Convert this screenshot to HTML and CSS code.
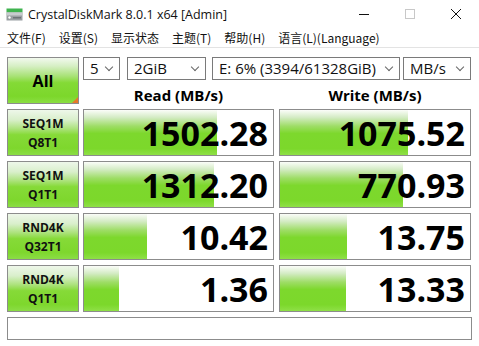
FILE: index.html
```html
<!DOCTYPE html>
<html lang="zh-CN">
<head>
  <meta charset="UTF-8">
  <title>CrystalDiskMark 8.0.1 x64 [Admin]</title>
  <link rel="stylesheet" href="styles.css">
</head>
<body>

<div class="titlebar">
  <svg class="app-icon" width="17" height="13" viewBox="0 0 17 13">
    <rect x="0.5" y="0.5" width="16" height="4" fill="#3fb34f"/>
    <rect x="0.5" y="4.5" width="16" height="8" fill="#9a9fa3"/>
    <rect x="0.5" y="4.5" width="16" height="3" fill="#c7cbce"/>
    <circle cx="3.5" cy="9.5" r="1.2" fill="#ffffff"/>
    <rect x="7" y="9" width="8" height="1.5" fill="#6e7478"/>
  </svg>
  <span class="title">CrystalDiskMark 8.0.1 x64 [Admin]</span>
  <div class="win-ctrls">
    <span class="wc"><svg width="10" height="10" viewBox="0 0 10 10"><line x1="0" y1="5.5" x2="10" y2="5.5" stroke="#111" stroke-width="1"/></svg></span>
    <span class="wc"><svg width="10" height="10" viewBox="0 0 10 10"><rect x="0.5" y="0.5" width="9" height="9" fill="none" stroke="#c8c8c8" stroke-width="1"/></svg></span>
    <span class="wc"><svg width="10" height="10" viewBox="0 0 10 10"><path d="M0 0 L10 10 M10 0 L0 10" stroke="#111" stroke-width="1"/></svg></span>
  </div>
</div>

<div class="menubar">
  <span>文件(F)</span>
  <span>设置(S)</span>
  <span>显示状态</span>
  <span>主题(T)</span>
  <span>帮助(H)</span>
  <span>语言(L)(Language)</span>
</div>

<div class="main">
  <div class="grid">
    <div class="all">All<span class="corner"></span></div>
    <div class="top-right">
      <div class="selects">
        <div class="sel sel-count">5<i class="chev"></i></div>
        <div class="sel sel-size">2GiB<i class="chev"></i></div>
        <div class="sel sel-drive"><span class="sel-text">E: 6% (3394/61328GiB)</span><i class="chev"></i></div>
        <div class="sel sel-unit">MB/s<i class="chev"></i></div>
      </div>
      <div class="heads">
        <div>Read (MB/s)</div>
        <div class="write-col">Write (MB/s)</div>
      </div>
    </div>

    <div class="label">SEQ1M<br>Q8T1</div>
    <div class="value"><div class="fill" style="width:133px"></div><span>1502.28</span></div>
    <div class="value write-col"><div class="fill" style="width:128px"></div><span>1075.52</span></div>

    <div class="label">SEQ1M<br>Q1T1</div>
    <div class="value"><div class="fill" style="width:130px"></div><span>1312.20</span></div>
    <div class="value write-col"><div class="fill" style="width:123px"></div><span>770.93</span></div>

    <div class="label">RND4K<br>Q32T1</div>
    <div class="value"><div class="fill" style="width:63px"></div><span>10.42</span></div>
    <div class="value write-col"><div class="fill" style="width:67px"></div><span>13.75</span></div>

    <div class="label">RND4K<br>Q1T1</div>
    <div class="value"><div class="fill" style="width:35px"></div><span>1.36</span></div>
    <div class="value write-col"><div class="fill" style="width:66px"></div><span>13.33</span></div>

    <div class="status"></div>
  </div>
</div>

</body>
</html>
```

FILE: styles.css
```css
body {
  margin: 0;
  background: #ffffff;
  font-family: "Open Sans", "Noto Sans CJK SC", sans-serif;
  color: #000;
  width: 479px;
  height: 346px;
  overflow: hidden;
}

/* title bar */
.titlebar {
  height: 28px;
  display: flex;
  align-items: center;
}
.app-icon {
  margin-left: 6px;
  margin-right: 5px;
  margin-top: 1px;
}
.title {
  font-size: 12.5px;
  color: #111;
}
.win-ctrls {
  margin-left: auto;
  display: flex;
  height: 28px;
}
.wc {
  width: 46px;
  display: flex;
  align-items: center;
  justify-content: center;
}

/* menu */
.menubar {
  height: 19px;
  border-bottom: 1px solid #e3e3e3;
  display: flex;
  align-items: center;
  padding-left: 1px;
  font-size: 12px;
  font-family: "Noto Sans CJK SC", sans-serif;
  color: #111;
}
.menubar span {
  padding: 0 6px;
  margin-right: 1px;
}

/* main area */
.main {
  padding: 9px 0 0 7px;
}
.grid {
  display: grid;
  grid-template-columns: 72px 191px 193px;
  grid-template-rows: repeat(5, 47px) 23px;
  column-gap: 4px;
  row-gap: 5px;
}
.write-col {
  margin-left: 1px;
}

.all {
  position: relative;
  box-sizing: border-box;
  border: 1px solid #8c8c8c;
  display: flex;
  align-items: center;
  justify-content: center;
  font-weight: bold;
  font-size: 16px;
  background: linear-gradient(to bottom, #f2f9ee 0%, #d6efc4 18%, #a9e277 40%, #84da36 55%, #7cd72b 85%, #8ade42 100%);
}
.corner {
  position: absolute;
  right: 0;
  bottom: 0;
  width: 0;
  height: 0;
  border-left: 6px solid transparent;
  border-bottom: 6px solid #e8782a;
}

.top-right {
  grid-column: 2 / 4;
  display: flex;
  flex-direction: column;
}
.selects {
  display: flex;
  height: 23px;
}
.sel {
  box-sizing: border-box;
  height: 23px;
  border: 1px solid #7a7a7a;
  font-size: 15px;
  line-height: 20px;
  padding-left: 6px;
  position: relative;
  white-space: nowrap;
  overflow: hidden;
  color: #111;
}
.sel-count { width: 37px; }
.sel-size { width: 79px; margin-left: 7px; }
.sel-drive { width: 188px; margin-left: 6px; }
.sel-unit { width: 68px; margin-left: 3px; }
.sel-text {
  display: block;
  width: 165px;
  overflow: hidden;
}
.chev {
  position: absolute;
  right: 7px;
  top: 6px;
  width: 5px;
  height: 5px;
  border-right: 1px solid #666;
  border-bottom: 1px solid #666;
  transform: rotate(45deg);
  background: #fff;
}
.heads {
  display: grid;
  grid-template-columns: 191px 193px;
  column-gap: 4px;
  padding-top: 5px;
  font-weight: bold;
  font-size: 15px;
  line-height: 20px;
  text-align: center;
}

.label {
  box-sizing: border-box;
  border: 1px solid #8c8c8c;
  display: flex;
  align-items: center;
  justify-content: center;
  text-align: center;
  font-weight: bold;
  font-size: 12px;
  line-height: 19px;
  color: #111;
  background: linear-gradient(to bottom, #eef7ea 0%, #d9efcb 22%, #abe27a 42%, #86da38 55%, #7ed72d 85%, #8bdd45 100%);
}

.value {
  position: relative;
  box-sizing: border-box;
  border: 1px solid #8c8c8c;
  background: #fff;
  display: flex;
  align-items: center;
  justify-content: flex-end;
  padding-right: 5px;
  font-weight: bold;
  font-size: 34px;
}
.value span {
  position: relative;
  line-height: 40px;
}
.fill {
  position: absolute;
  left: 0;
  top: 0;
  bottom: 0;
  background: linear-gradient(to bottom, #fbfdf9 0%, #d5ecc6 16%, #9edd66 36%, #7dd82d 52%, #7cd82b 86%, #8fe047 100%);
}

.status {
  grid-column: 1 / 4;
  box-sizing: border-box;
  border: 1px solid #8c8c8c;
  margin-right: -1px;
}
```
